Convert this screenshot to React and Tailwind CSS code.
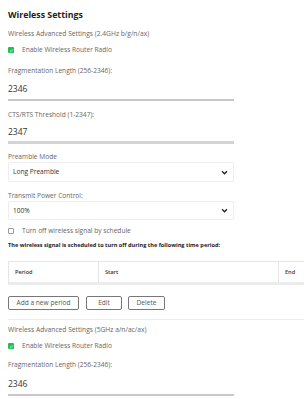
import React from 'react';

function Check({ on }) {
  return on ? (
    <span className="w-[6px] h-[6px] bg-[#1fc05a] rounded-[1px] flex items-center justify-center">
      <svg viewBox="0 0 6 6" className="w-[5px] h-[5px]"><path d="M1.2 3.2 L2.4 4.3 L4.8 1.7" stroke="white" strokeWidth="0.9" fill="none" /></svg>
    </span>
  ) : (
    <span className="w-[6px] h-[6px] border border-[#999] rounded-[1px] bg-white" />
  );
}

function Field({ label, value, thick, gap = 'mt-[3px]' }) {
  return (
    <div className="w-[226px]">
      <div className="text-[6.6px] text-[#666] h-[14px] leading-[14px]">{label}</div>
      <div className={`text-[8.5px] text-[#333] h-[16px] leading-[16px] ${gap}`}>{value}</div>
      <div className={thick ? 'h-[3px] bg-[#d4d4d4] mt-[1px]' : 'h-[2px] bg-[#c8c8c8] mt-[2px]'} />
    </div>
  );
}

function Select({ value, className }) {
  return (
    <div className={`w-[226px] border border-[#eeeeee] rounded-[2px] flex items-center justify-between pl-[4px] pr-[5px] text-[6.6px] text-[#333] ${className}`}>
      <span>{value}</span>
      <svg viewBox="0 0 8 6" className="w-[7px] h-[5px]"><path d="M1 1.5 L4 4.5 L7 1.5" stroke="#222" strokeWidth="1.6" fill="none" /></svg>
    </div>
  );
}

export default function App() {
  return (
    <div className="w-[304px] h-[399px] overflow-hidden bg-white pl-[8px]" style={{ fontFamily: '"Open Sans", sans-serif' }}>
      <h1 className="text-[8.8px] font-bold text-[#222] pt-[8px] leading-[14px]">Wireless Settings</h1>
      <div className="text-[6.7px] text-[#666] mt-[7px] h-[10px] leading-[10px]">Wireless Advanced Settings (2.4GHz b/g/n/ax)</div>
      <div className="flex items-center gap-[8px] mt-[6px] h-[10px] text-[6.6px] text-[#666]">
        <Check on />
        <span>Enable Wireless Router Radio</span>
      </div>
      <div className="mt-[9px]">
        <Field label="Fragmentation Length (256-2346):" value="2346" />
      </div>
      <div className="mt-[7px]">
        <Field label="CTS/RTS Threshold (1-2347):" value="2347" thick gap="mt-[2px]" />
      </div>
      <div className="text-[6.6px] text-[#666] mt-[9px] h-[8px] leading-[8px]">Preamble Mode</div>
      <Select value="Long Preamble" className="h-[20px] mt-[1px]" />
      <div className="text-[6.6px] text-[#666] mt-[10px] h-[8px] leading-[8px]">Transmit Power Control:</div>
      <Select value="100%" className="h-[19px] mt-[1px]" />
      <div className="flex items-center gap-[8px] mt-[6px] h-[10px] text-[6.6px] text-[#666]">
        <Check />
        <span>Turn off wireless signal by schedule</span>
      </div>
      <div className="text-[5.6px] font-bold text-[#222] mt-[4px] h-[10px] leading-[10px] whitespace-nowrap">The wireless signal is scheduled to turn off during the following time period:</div>
      <div className="mt-[11px] w-[320px] h-[24px] flex border border-[#e5e5e5] border-b-[3px] border-b-[#ececec] text-[5.6px] font-semibold text-[#333]">
        <div className="w-[90px] border-r border-[#e5e5e5] flex items-center pl-[6px]">Period</div>
        <div className="w-[180px] border-r border-[#e5e5e5] flex items-center pl-[6px]">Start</div>
        <div className="flex-1 flex items-center pl-[6px]">End</div>
      </div>
      <div className="flex mt-[11px] text-[6.6px] text-[#555]">
        <button className="w-[71px] h-[14px] border border-[#777] rounded-[2px]">Add a new period</button>
        <button className="w-[36px] h-[14px] border border-[#777] rounded-[2px] ml-[7px]">Edit</button>
        <button className="w-[37px] h-[14px] border border-[#777] rounded-[2px] ml-[6px]">Delete</button>
      </div>
      <div className="h-[1px] bg-[#ececec] mt-[9px]" />
      <div className="text-[6.7px] text-[#666] mt-[5px] h-[10px] leading-[10px]">Wireless Advanced Settings (5GHz a/n/ac/ax)</div>
      <div className="flex items-center gap-[8px] mt-[6px] h-[10px] text-[6.6px] text-[#666]">
        <Check on />
        <span>Enable Wireless Router Radio</span>
      </div>
      <div className="mt-[7px]">
        <Field label="Fragmentation Length (256-2346):" value="2346" gap="mt-[4px]" />
      </div>
    </div>
  );
}
